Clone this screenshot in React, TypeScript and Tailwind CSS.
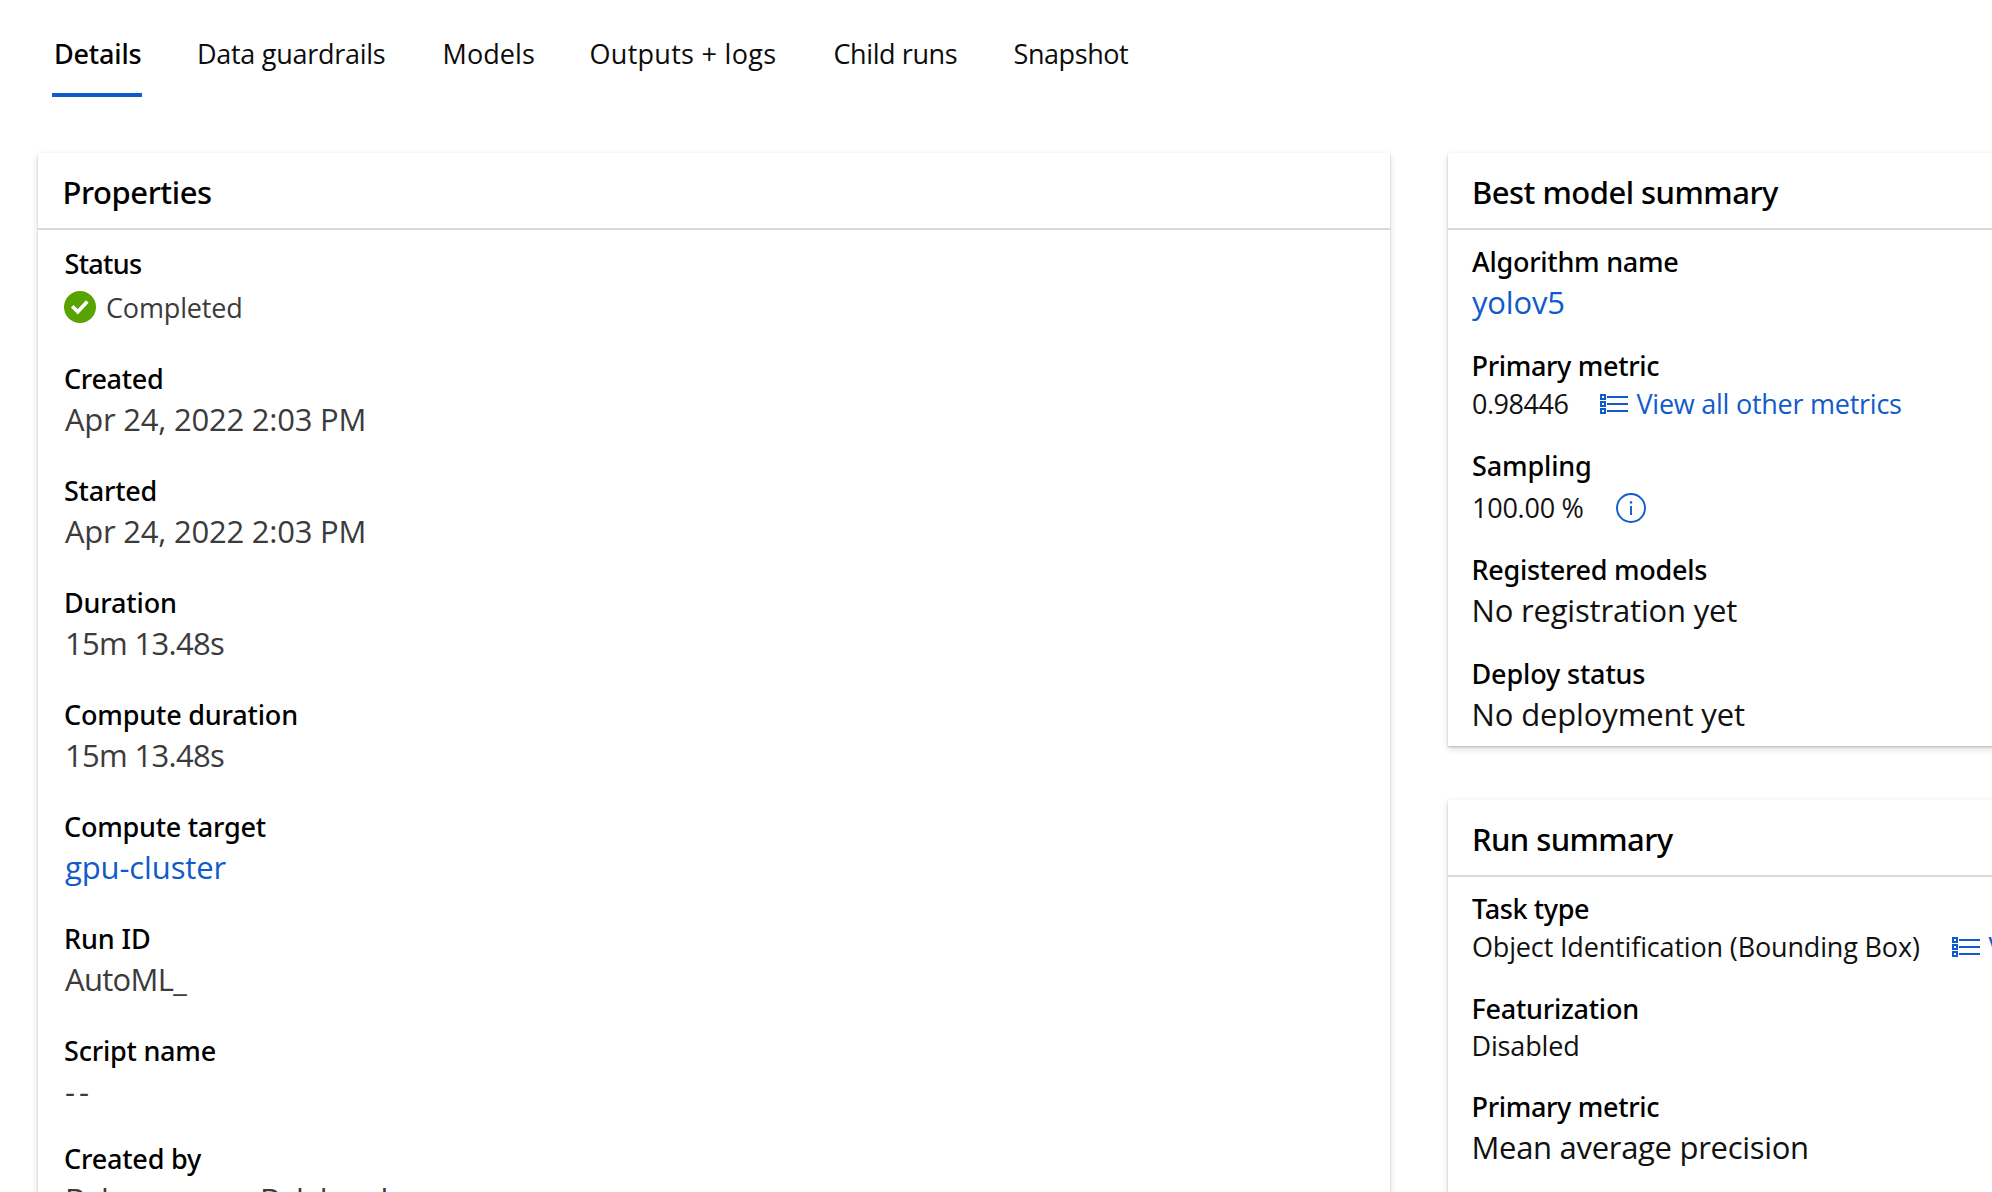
import React from "react";

function ListIcon() {
  return (
    <svg width="28" height="20" viewBox="0 0 28 20" fill="none" stroke="#105bcb" strokeWidth="2" className="shrink-0">
      <rect x="1" y="1" width="4" height="4" />
      <rect x="1" y="8" width="4" height="4" />
      <rect x="1" y="15" width="4" height="4" />
      <path d="M7 3H28M7 10H28M7 17H28" />
    </svg>
  );
}

function InfoIcon() {
  return (
    <svg width="30" height="30" viewBox="0 0 30 30" fill="none" className="shrink-0">
      <circle cx="15" cy="15" r="14" stroke="#105bcb" strokeWidth="1.9" />
      <path d="M15 13V22" stroke="#105bcb" strokeWidth="1.9" />
      <rect x="13.8" y="8.2" width="2.4" height="2.4" rx="0.6" fill="#105bcb" />
    </svg>
  );
}

function CheckIcon() {
  return (
    <svg width="32" height="32" viewBox="0 0 32 32" fill="none" className="mb-px shrink-0">
      <circle cx="16" cy="16" r="16" fill="#57a300" />
      <path d="M8.2 15.2L13.8 20.8L23.3 10.6" stroke="#fff" strokeWidth="3.6" />
    </svg>
  );
}

function Card({ title, titleClass, headerClass, className, children }: {
  title: string;
  titleClass: string;
  headerClass: string;
  className: string;
  children: React.ReactNode;
}) {
  return (
    <section className={`bg-white shadow-[0_3.2px_7.2px_rgba(0,0,0,0.14),0_0.6px_1.8px_rgba(0,0,0,0.2)] ${className}`}>
      <header className={`h-[77px] border-b-2 border-[#d9d9d9] pt-[18px] ${headerClass}`}>
        <h2 className={`font-['Noto_Sans',sans-serif] text-[31px] leading-[42px] font-medium text-black ${titleClass}`}>{title}</h2>
      </header>
      {children}
    </section>
  );
}

function Field({ label, labelClass, className = "", children }: {
  label: string;
  labelClass: string;
  className?: string;
  children: React.ReactNode;
}) {
  return (
    <div className={className}>
      <dt className={`font-['Noto_Sans',sans-serif] text-[27px] leading-[37px] font-medium text-black ${labelClass}`}>{label}</dt>
      {children}
    </div>
  );
}

function Value({ className, children }: { className: string; children: React.ReactNode }) {
  return <dd className={`text-[31px] leading-[44px] ${className}`}>{children}</dd>;
}

export default function App() {
  return (
    <div className="h-[1192px] w-[1992px] overflow-hidden bg-white font-['Open_Sans',sans-serif] whitespace-nowrap">
      <nav className="grid h-[97px] grid-cols-[145px_245px_147.5px_244px_180px_auto] pt-[35px] pl-[52px] text-[27px] leading-[37px] text-[#0c0c0c]">
        <a className="flex w-[90px] flex-col border-b-4 border-[#105bcb] pl-[2px] font-['Noto_Sans',sans-serif] font-medium tracking-[-0.183px] text-black">Details</a>
        <a className="tracking-[-0.284px]">Data guardrails</a>
        <a className="pl-[0.5px] tracking-[0.096px]">Models</a>
        <a className="tracking-[0.289px]">Outputs + logs</a>
        <a className="tracking-[-0.409px]">Child runs</a>
        <a className="tracking-[-0.422px]">Snapshot</a>
      </nav>

      <main className="mt-[56px] ml-[38px] flex items-start gap-[58px]">
        <Card title="Properties" titleClass="tracking-[-0.434px]" headerClass="pl-[24.5px]" className="h-[1200px] w-[1352px] shrink-0">
          <dl className="pt-[15px] pl-[26px] text-[#3b3b3b]">
            <Field label="Status" labelClass="pl-[0.5px] tracking-[-0.681px]" className="mb-[27px]">
              <dd className="flex h-[51px] items-center gap-[10px] text-[27px] leading-[37px] tracking-[-0.153px]">
                <CheckIcon />
                <span>Completed</span>
              </dd>
            </Field>
            <Field label="Created" labelClass="tracking-[-0.301px]" className="mb-[31px]">
              <Value className="ml-px tracking-[-0.23px]">Apr 24, 2022 2:03 PM</Value>
            </Field>
            <Field label="Started" labelClass="tracking-[-0.232px]" className="mb-[31px]">
              <Value className="ml-px tracking-[-0.23px]">Apr 24, 2022 2:03 PM</Value>
            </Field>
            <Field label="Duration" labelClass="tracking-[-0.16px]" className="mb-[31px]">
              <Value className="ml-px tracking-[-0.7px]">15m 13.48s</Value>
            </Field>
            <Field label="Compute duration" labelClass="tracking-[-0.18px]" className="mb-[31px]">
              <Value className="ml-px tracking-[-0.7px]">15m 13.48s</Value>
            </Field>
            <Field label="Compute target" labelClass="tracking-[-0.247px]" className="mb-[31px]">
              <Value className="ml-px tracking-[-0.12px] text-[#105bcb]">gpu-cluster</Value>
            </Field>
            <Field label="Run ID" labelClass="tracking-[-0.1px]" className="mb-[31px]">
              <Value className="ml-px tracking-[-0.68px]">AutoML_</Value>
            </Field>
            <Field label="Script name" labelClass="tracking-[-0.216px]" className="mb-[27px]">
              <Value className="ml-px tracking-[3.9px]">--</Value>
            </Field>
            <Field label="Created by" labelClass="tracking-[-0.196px]">
              <Value className="ml-px tracking-[-0.65px]">Balamurugan Balakaral</Value>
            </Field>
          </dl>
        </Card>

        <div className="flex shrink-0 flex-col gap-[54px]">
          <Card title="Best model summary" titleClass="tracking-[-0.522px]" headerClass="pl-[24px]" className="h-[593px] w-[600px]">
            <dl className="pt-[13px] pl-[24px] text-[#111]">
              <Field label="Algorithm name" labelClass="tracking-[-0.263px]" className="mb-[23px]">
                <Value className="tracking-[-0.188px] text-[#105bcb]">yolov5</Value>
              </Field>
              <Field label="Primary metric" labelClass="-ml-[0.5px] tracking-[-0.332px]" className="mb-[24px]">
                <dd className="flex h-[39px] items-center text-[27px] leading-[37px]">
                  <span className="w-[128px] tracking-[-0.464px]">0.98446</span>
                  <a className="flex items-center gap-[8.5px] tracking-[-0.25px] text-[#105bcb]">
                    <ListIcon />
                    <span>View all other metrics</span>
                  </a>
                </dd>
              </Field>
              <Field label="Sampling" labelClass="tracking-[-0.15px]" className="mb-[20px]">
                <dd className="flex h-[47px] items-center text-[27px] leading-[37px]">
                  <span className="w-[144px] tracking-[-0.242px]">100.00 %</span>
                  <InfoIcon />
                </dd>
              </Field>
              <Field label="Registered models" labelClass="-ml-[0.5px] tracking-[-0.29px]" className="mb-[23px]">
                <Value className="-ml-[0.5px] tracking-[-0.18px]">No registration yet</Value>
              </Field>
              <Field label="Deploy status" labelClass="-ml-[0.5px] tracking-[-0.15px]">
                <Value className="-ml-[0.5px] tracking-[-0.13px]">No deployment yet</Value>
              </Field>
            </dl>
          </Card>

          <Card title="Run summary" titleClass="tracking-[-0.589px]" headerClass="pl-[24px]" className="h-[500px] w-[600px]">
            <dl className="pt-[13px] pl-[24px] text-[#111]">
              <Field label="Task type" labelClass="tracking-[-0.38px]" className="mb-[24px]">
                <dd className="flex h-[39px] items-center text-[27px] leading-[37px]">
                  <span className="w-[480px] tracking-[-0.16px]">Object Identification (Bounding Box)</span>
                  <a className="flex items-center gap-[8.5px] tracking-[-0.25px] text-[#105bcb]">
                    <ListIcon />
                    <span>V</span>
                  </a>
                </dd>
              </Field>
              <Field label="Featurization" labelClass="-ml-[0.5px] tracking-[-0.25px]" className="mb-[24px]">
                <dd className="-ml-[0.5px] text-[27px] leading-[37px] tracking-[-0.15px]">Disabled</dd>
              </Field>
              <Field label="Primary metric" labelClass="-ml-[0.5px] tracking-[-0.332px]">
                <Value className="-ml-[0.5px] tracking-[-0.3px]">Mean average precision</Value>
              </Field>
            </dl>
          </Card>
        </div>
      </main>
    </div>
  );
}
